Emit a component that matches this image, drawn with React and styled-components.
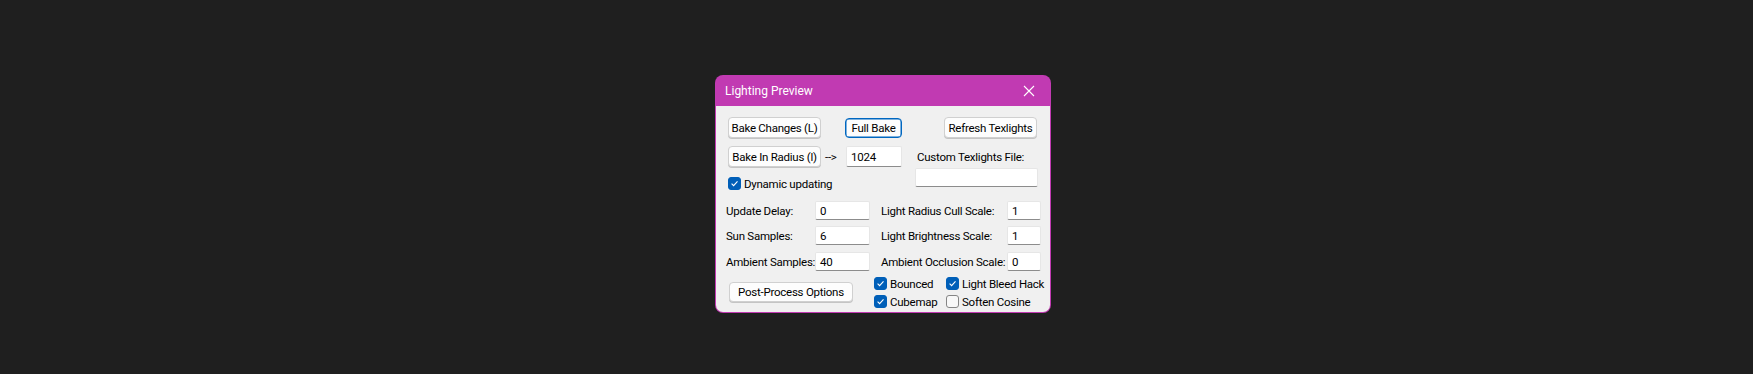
import React from "react";
import styled, { createGlobalStyle } from "styled-components";

const Global = createGlobalStyle`
  html, body {
    margin: 0;
    padding: 0;
    background: #1f1f1f;
  }
  body {
    width: 1753px;
    height: 374px;
    overflow: hidden;
    font-family: Roboto, "Liberation Sans", sans-serif;
    font-size: 11.5px;
    letter-spacing: -0.25px;
    color: #000;
  }
`;

const Window = styled.div`
  width: 336px;
  height: 238px;
  margin: 75px 0 0 715px;
  background: #c13ab2;
  border-radius: 8px;
  display: flex;
  flex-direction: column;
  overflow: hidden;
  box-sizing: border-box;
`;

const TitleBar = styled.div`
  height: 31px;
  flex: none;
  display: flex;
  align-items: center;
  justify-content: space-between;
  padding: 0 8px 0 10px;
  color: #fff;
  font-size: 12px;
  letter-spacing: 0;
`;

const CloseButton = styled.div`
  width: 28px;
  height: 28px;
  display: flex;
  align-items: center;
  justify-content: center;
`;

const Client = styled.div`
  flex: 1;
  margin: 0 1px 1px 1px;
  background: #f0f0f0;
  border-radius: 0 0 7px 7px;
  padding: 11px 0 0 0;
  box-sizing: border-box;
`;

const Row = styled.div`
  display: flex;
  align-items: center;
  padding-left: ${(p) => p.$pl || 0}px;
  margin-top: ${(p) => p.$mt || 0}px;
`;

const Button = styled.div`
  height: ${(p) => p.$h || 21}px;
  width: ${(p) => p.$w}px;
  margin-left: ${(p) => p.$ml || 0}px;
  box-sizing: border-box;
  display: flex;
  align-items: center;
  justify-content: center;
  background: #fdfdfd;
  border: 1px solid ${(p) => (p.$focus ? "#0067c0" : "#d0d0d0")};
  box-shadow: ${(p) => (p.$focus ? "inset 0 0 0 0.5px #0067c0" : "0 1px 0 #c4c4c4")};
  border-radius: 4px;
  white-space: nowrap;
`;

const TextBox = styled.div`
  width: ${(p) => p.$w}px;
  height: ${(p) => p.$h || 19}px;
  margin-left: ${(p) => p.$ml || 0}px;
  box-sizing: border-box;
  background: #fff;
  border: 1px solid #e6e6e6;
  border-bottom: 1px solid #8c8c8c;
  border-radius: 2px;
  padding: 0 4px;
  display: flex;
  align-items: center;
`;

const Arrow = styled.span`
  margin-left: 4px;
  width: 21px;
`;

const Label = styled.span`
  white-space: nowrap;
  width: ${(p) => (p.$w ? `${p.$w}px` : "auto")};
  padding-left: ${(p) => p.$pl || 0}px;
  flex: none;
`;

const TopSplit = styled.div`
  display: flex;
  margin-top: 8px;
`;

const TopLeft = styled.div`
  display: flex;
  flex-direction: column;
  padding-left: 12px;
  width: 187px;
`;

const TopRight = styled.div`
  display: flex;
  flex-direction: column;
  padding-top: 4px;
  gap: 4px;
`;

const BottomSplit = styled.div`
  display: flex;
  margin-top: 11px;
`;

const Column = styled.div`
  display: flex;
  flex-direction: column;
  padding-left: ${(p) => p.$pl}px;
  width: ${(p) => p.$w}px;
`;

const FieldRow = styled.div`
  display: flex;
  align-items: center;
  height: 19px;
  margin-bottom: ${(p) => p.$mb ?? 6}px;
`;

const CheckGrid = styled.div`
  display: grid;
  grid-template-columns: 72px auto;
  row-gap: 5px;
  margin-left: -7px;
`;

const CheckItem = styled.label`
  display: flex;
  align-items: center;
  gap: 3px;
  height: 13px;
  white-space: nowrap;
`;

const Box = styled.span`
  width: 13px;
  height: 13px;
  box-sizing: border-box;
  border-radius: 3px;
  flex: none;
  display: flex;
  align-items: center;
  justify-content: center;
  background: ${(p) => (p.$checked ? "#005fb8" : "#f8f8f8")};
  border: 1px solid ${(p) => (p.$checked ? "#005fb8" : "#858585")};
`;

const Check = ({ checked, children }) => (
  <CheckItem>
    <Box $checked={checked}>
      {checked && (
        <svg width="9" height="9" viewBox="0 0 9 9">
          <path d="M1.6 4.7 L3.6 6.6 L7.5 2.4" fill="none" stroke="#fff" strokeWidth="1.1" />
        </svg>
      )}
    </Box>
    {children}
  </CheckItem>
);

const App = () => {
  return (
    <>
      <Global />
      <Window>
        <TitleBar>
          <span>Lighting Preview</span>
          <CloseButton>
            <svg width="12" height="12" viewBox="0 0 12 12">
              <path d="M1 1 L11 11 M11 1 L1 11" stroke="#fff" strokeWidth="1.1" />
            </svg>
          </CloseButton>
        </TitleBar>
        <Client>
          <Row $pl={12}>
            <Button $w={93}>Bake Changes (L)</Button>
            <Button $w={57} $h={20} $ml={24} $focus>Full Bake</Button>
            <Button $w={93} $ml={42}>Refresh Texlights</Button>
          </Row>
          <TopSplit>
            <TopLeft>
              <Row>
                <Button $w={93}>Bake In Radius (l)</Button>
                <Arrow>--&gt;</Arrow>
                <TextBox $w={56} $h={21}>1024</TextBox>
              </Row>
              <Row $mt={10}>
                <Check checked>Dynamic updating</Check>
              </Row>
            </TopLeft>
            <TopRight>
              <Label $pl={2}>Custom Texlights File:</Label>
              <TextBox $w={123} />
            </TopRight>
          </TopSplit>
          <BottomSplit>
            <Column $pl={10} $w={155}>
              <FieldRow>
                <Label $w={89}>Update Delay:</Label>
                <TextBox $w={55}>0</TextBox>
              </FieldRow>
              <FieldRow $mb={7}>
                <Label $w={89}>Sun Samples:</Label>
                <TextBox $w={55}>6</TextBox>
              </FieldRow>
              <FieldRow $mb={11}>
                <Label $w={89}>Ambient Samples:</Label>
                <TextBox $w={55}>40</TextBox>
              </FieldRow>
              <Button $w={124} $h={20} $ml={3}>Post-Process Options</Button>
            </Column>
            <Column $pl={0} $w={165}>
              <FieldRow>
                <Label $w={126}>Light Radius Cull Scale:</Label>
                <TextBox $w={34}>1</TextBox>
              </FieldRow>
              <FieldRow $mb={7}>
                <Label $w={126}>Light Brightness Scale:</Label>
                <TextBox $w={34}>1</TextBox>
              </FieldRow>
              <FieldRow $mb={6}>
                <Label $w={126}>Ambient Occlusion Scale:</Label>
                <TextBox $w={34}>0</TextBox>
              </FieldRow>
              <CheckGrid>
                <Check checked>Bounced</Check>
                <Check checked>Light Bleed Hack</Check>
                <Check checked>Cubemap</Check>
                <Check>Soften Cosine</Check>
              </CheckGrid>
            </Column>
          </BottomSplit>
        </Client>
      </Window>
    </>
  );
};

export default App;
